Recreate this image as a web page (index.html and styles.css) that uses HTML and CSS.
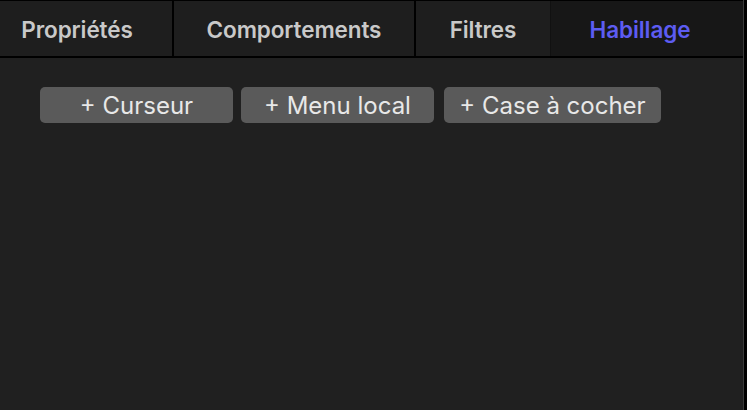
FILE: index.html
```html
<!DOCTYPE html>
<html lang="fr">
<head>
<meta charset="utf-8">
<link rel="stylesheet" href="styles.css">
</head>
<body>
<div class="panel">
  <div class="tabs">
    <div class="tab tab-1">Propriétés</div>
    <div class="tab tab-2">Comportements</div>
    <div class="tab tab-3">Filtres</div>
    <div class="tab tab-4 active">Habillage</div>
  </div>
  <div class="content">
    <button class="btn btn-1">+ Curseur</button>
    <button class="btn btn-2">+ Menu local</button>
    <button class="btn btn-3">+ Case à cocher</button>
  </div>
</div>
</body>
</html>
```
FILE: styles.css
```css
html, body {
  margin: 0;
  padding: 0;
  background: #000;
}
body {
  width: 747px;
  height: 410px;
  overflow: hidden;
  font-family: Inter, "Liberation Sans", sans-serif;
}
.panel {
  width: 743px;
  height: 410px;
  background: #202020;
  border-right: 1px solid #3a3a3a;
  display: flex;
  flex-direction: column;
}
.tabs {
  display: flex;
  height: 55px;
  border-top: 1px solid #000;
  border-bottom: 2px solid #000;
  gap: 2px;
  background: #000;
}
.tab {
  display: flex;
  align-items: center;
  justify-content: center;
  background: #1e1e1e;
  color: #c9c9c9;
  font-weight: 600;
  font-size: 22.5px;
  letter-spacing: -0.1px;
  padding-top: 2px;
  box-sizing: border-box;
}
.tab-1 { width: 172px; padding-right: 18px; }
.tab-2 { width: 240px; }
.tab-3 { width: 135px; margin-right: -2px; border-right: 1px solid #111; }
.tab-4 { flex: 1; padding-right: 14px; }
.tab.active {
  background: #171717;
  color: #5d5cf2;
}
.content {
  flex: 1;
  display: flex;
  align-items: flex-start;
  padding: 29px 0 0 40px;
}
.btn {
  height: 36px;
  border: none;
  border-radius: 5px;
  background: #5a5a5a;
  color: #e8e8e8;
  font-family: Inter, "Liberation Sans", sans-serif;
  font-size: 24px;
  font-weight: 400;
  padding: 1px 0 0;
  cursor: default;
}
.btn-1 { width: 193px; margin-right: 8px; }
.btn-2 { width: 193px; margin-right: 10px; }
.btn-3 { width: 217px; }
```
